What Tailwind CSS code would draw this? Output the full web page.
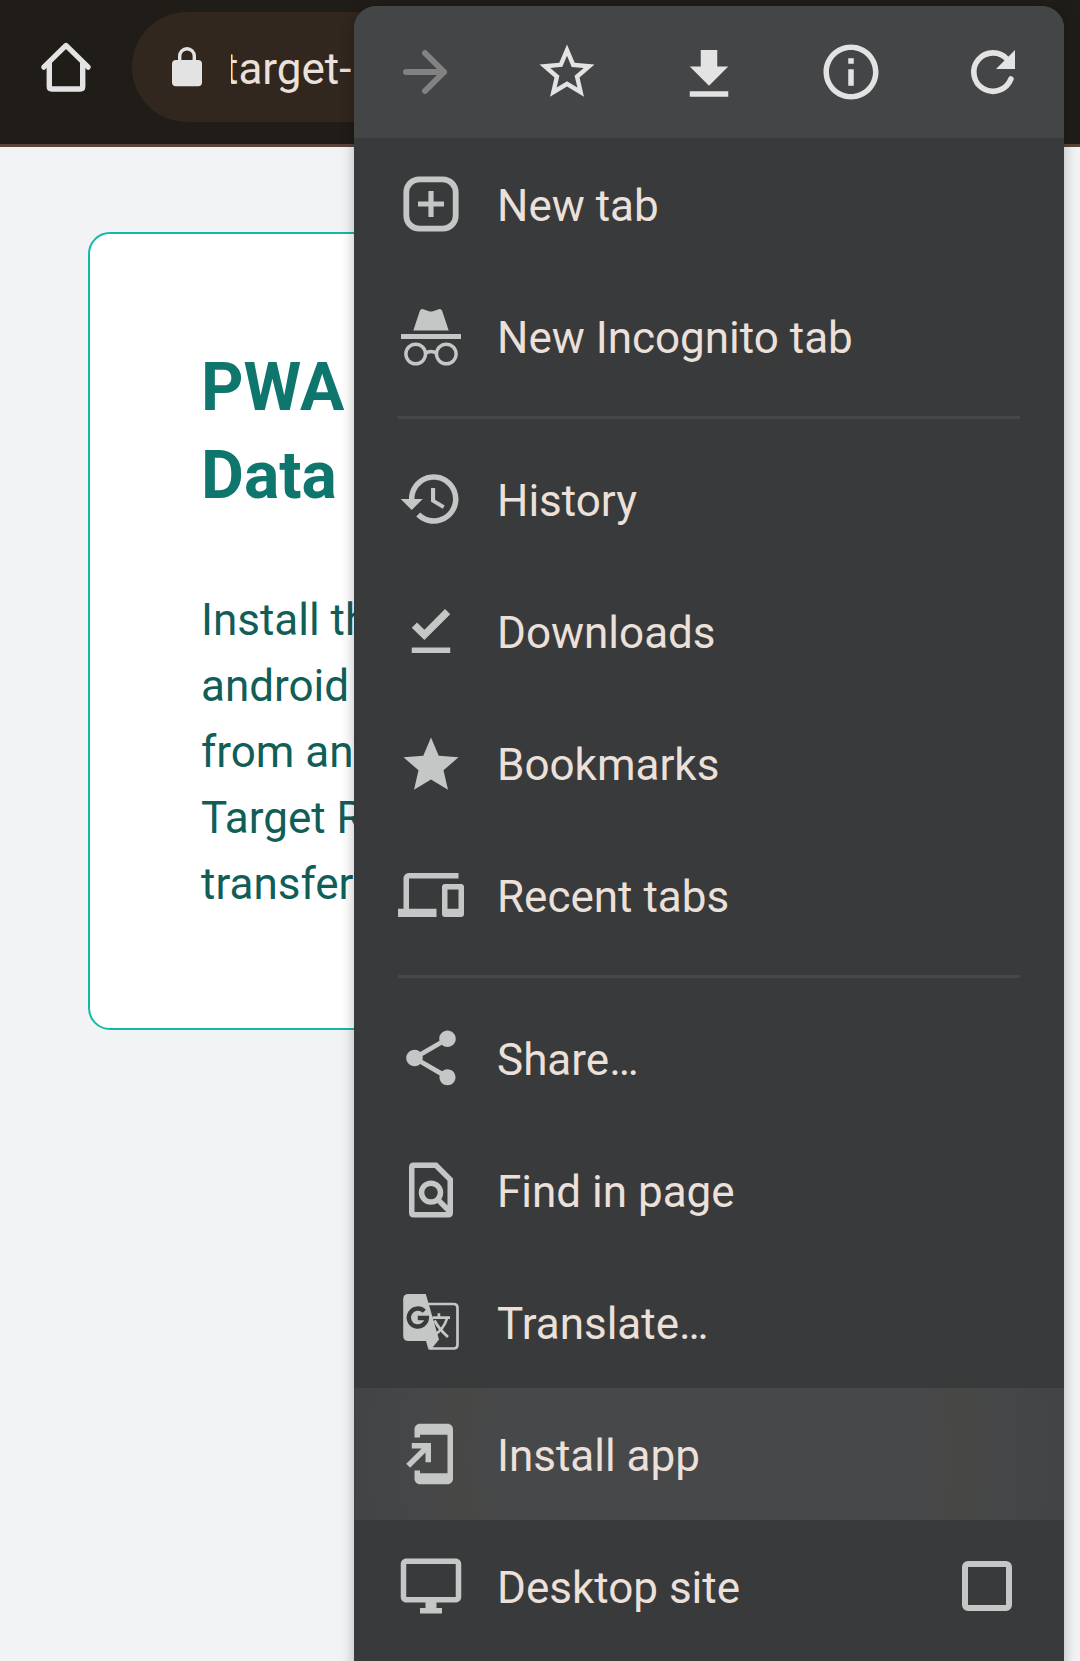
<!DOCTYPE html>
<html lang="en">
<head>
<meta charset="utf-8">
<title>PWA Data Target</title>
<script src="https://cdn.jsdelivr.net/npm/@tailwindcss/browser@4"></script>
</head>
<body class="relative h-[1661px] w-[1080px] overflow-hidden bg-[#f2f3f5] font-[Roboto,sans-serif] text-[44px] leading-[66px]">

<!-- Browser toolbar -->
<header class="flex h-[147px] items-start border-b-[3px] border-[#584538] bg-[#201c17]">
  <svg class="mt-[34px] ml-[33px] size-[66px] shrink-0" viewBox="0 0 66 66" fill="none" stroke="#e3e3e3" stroke-linecap="round">
    <path d="M10.8 33.2 33 11.4 55.2 33.2" stroke-width="5.2" stroke-linejoin="round"/>
    <path d="M16.3 29V52.500q0 2.500 2.500 2.500H47.200q2.500 0 2.500-2.500V29" stroke-width="5.400" stroke-linecap="butt"/>
  </svg>
  <div class="mt-3 mr-[80px] ml-[33px] flex h-[110px] grow items-center rounded-full bg-[#32271f]">
    <svg class="ml-[40px] h-[40px] w-[30px] shrink-0" viewBox="0 0 30 40">
      <rect y="13" width="30" height="26.200" rx="4" fill="#e3e3e3"/>
      <path d="M7.700 15V9a7.300 7.300 0 0 1 14.600 0v6" fill="none" stroke="#e3e3e3" stroke-width="3.400"/>
    </svg>
    <div class="ml-[29px] overflow-hidden text-[#ece0da]"><span class="-ml-[7px] block pt-[3px]">target-</span></div>
  </div>
</header>

<!-- Page content -->
<main class="px-[88px] pt-[85px]">
  <section class="h-[798px] overflow-hidden rounded-[22px] border-2 border-[#14b8a6] bg-white px-[111px] py-[110px] whitespace-nowrap">
    <h1 class="text-[66px] leading-[88px] font-bold text-[#0f766e]">PWA<br>Data</h1>
    <p class="pt-[67px] text-[#115e59]">Install this<br>android<br>from any<br>Target R<br>transfer</p>
  </section>
</main>

<!-- Overflow menu, floating above the page -->
<nav class="absolute top-[6px] left-[354px] h-[1680px] w-[710px] overflow-hidden rounded-t-[22px] bg-[#393a3b] text-[#ece0da] shadow-[0_3px_14px_rgba(0,0,0,0.26)]">
  <div class="grid h-[132px] grid-cols-5 place-items-center bg-[#444546]">
    <svg class="size-[66px]" viewBox="0 0 66 66" fill="none" stroke="#828282" stroke-width="6" stroke-linecap="round" stroke-linejoin="round"><path d="M14 33H52M33 14 52 33 33 52"/></svg>
    <svg class="size-[66px]" viewBox="0 0 24 24" fill="#e3e3e3"><path d="M22 9.240l-7.190-.620L12 2 9.190 8.630 2 9.240l5.460 4.730L5.820 21 12 17.270 18.180 21l-1.630-7.030L22 9.240zM12 15.400l-3.760 2.270 1-4.280-3.320-2.880 4.380-.380L12 6.100l1.710 4.040 4.380.380-3.320 2.880 1 4.280L12 15.400z"/></svg>
    <svg class="size-[66px]" viewBox="0 0 24 24" fill="#e3e3e3"><path d="M9 4h6v6h4l-7 7-7-7h4zM5 19h14v2H5z"/></svg>
    <svg class="size-[66px]" viewBox="0 0 24 24" fill="#e3e3e3"><path d="M11 7h2v2h-2zm0 4h2v6h-2zm1-9C6.480 2 2 6.480 2 12s4.480 10 10 10 10-4.480 10-10S17.520 2 12 2zm0 18c-4.410 0-8-3.590-8-8s3.590-8 8-8 8 3.590 8 8-3.590 8-8 8z"/></svg>
    <svg class="size-[66px]" viewBox="0 0 66 66"><path d="M47.500 20.500A19.200 19.200 0 1 0 50.900 40" fill="none" stroke="#e3e3e3" stroke-width="5.600" stroke-linecap="round"/><path d="M55 11V30H36z" fill="#e3e3e3"/></svg>
  </div>

  <div class="flex h-[132px] items-center gap-[33px] px-[44px]">
    <svg class="size-[66px]" viewBox="0 0 66 66" fill="none" stroke="#c5c7c6"><rect x="8.300" y="8.300" width="49.400" height="49.400" rx="13" stroke-width="5.800"/><path d="M20 33H46M33 20V46" stroke-width="5.200"/></svg>
    <span class="pt-[3px]">New tab</span>
  </div>
  <div class="flex h-[132px] items-center gap-[33px] px-[44px]">
    <svg class="size-[66px]" viewBox="0 0 66 66" fill="#c5c7c6">
      <path d="M15.300 27.500 21.800 8Q22.800 5.600 25.200 6.200L31 8.200Q33 8.900 35 8.200L40.800 6.200Q43.200 5.600 44.200 8L50.700 27.500zM3 31H63V36H3z"/>
      <g fill="none" stroke="#c5c7c6" stroke-width="3.400"><circle cx="17.700" cy="51" r="9.800"/><circle cx="48.300" cy="51" r="9.800"/><path d="M27 50.500Q33 46.500 39 50.500"/></g>
    </svg>
    <span class="pt-[3px]">New Incognito tab</span>
  </div>
  <hr class="mx-[44px] my-[14px] border-t-[3px] border-[#464747]">
  <div class="flex h-[132px] items-center gap-[33px] px-[44px]">
    <svg class="size-[66px]" viewBox="0 0 24 24" fill="#c5c7c6"><path d="M13 3c-4.970 0-9 4.030-9 9H1l3.890 3.890.070.140L9 12H6c0-3.870 3.130-7 7-7s7 3.130 7 7-3.130 7-7 7c-1.930 0-3.680-.790-4.940-2.060l-1.420 1.420C8.270 19.990 10.510 21 13 21c4.970 0 9-4.030 9-9s-4.030-9-9-9zm-1 5v5l4.280 2.540.720-1.210-3.500-2.080V8H12z"/></svg>
    <span class="pt-[3px]">History</span>
  </div>
  <div class="flex h-[132px] items-center gap-[33px] px-[44px]">
    <svg class="size-[66px]" viewBox="0 0 24 24" fill="#c5c7c6"><path d="M17.100 4 19 5.900 9.600 15.300 5 10.800 6.900 8.900 9.600 11.500zM5 18h14v2H5z"/></svg>
    <span class="pt-[3px]">Downloads</span>
  </div>
  <div class="flex h-[132px] items-center gap-[33px] px-[44px]">
    <svg class="size-[66px]" viewBox="0 -0.700 24 24" fill="#c5c7c6"><path d="M12 17.270 18.180 21l-1.640-7.030L22 9.240l-7.190-.610L12 2 9.190 8.630 2 9.240l5.460 4.730L5.820 21z"/></svg>
    <span class="pt-[3px]">Bookmarks</span>
  </div>
  <div class="flex h-[132px] items-center gap-[33px] px-[44px]">
    <svg class="size-[66px]" viewBox="0 0 24 24" fill="#c5c7c6"><path d="M4 6h18V4H4c-1.100 0-2 .900-2 2v11H0v3h14v-3H4V6zm19 2h-6c-.550 0-1 .450-1 1v10c0 .550.450 1 1 1h6c.550 0 1-.450 1-1V9c0-.550-.450-1-1-1zm-1 9h-4v-7h4v7z"/></svg>
    <span class="pt-[3px]">Recent tabs</span>
  </div>
  <hr class="mx-[44px] my-[14px] border-t-[3px] border-[#464749]">
  <div class="flex h-[132px] items-center gap-[33px] px-[44px]">
    <svg class="size-[66px]" viewBox="0 0 24 24" fill="#c5c7c6"><path d="M18 16.080c-.760 0-1.440.300-1.960.770L8.910 12.700c.050-.230.090-.460.090-.700s-.040-.470-.090-.700l7.050-4.110c.540.500 1.250.810 2.040.810 1.660 0 3-1.340 3-3s-1.340-3-3-3-3 1.340-3 3c0 .240.040.470.090.700L8.040 9.810C7.500 9.310 6.790 9 6 9c-1.660 0-3 1.340-3 3s1.340 3 3 3c.790 0 1.500-.310 2.040-.810l7.120 4.160c-.050.210-.080.430-.080.650 0 1.610 1.310 2.920 2.920 2.920s2.920-1.310 2.920-2.920-1.310-2.920-2.920-2.920z"/></svg>
    <span class="pt-[3px]">Share…</span>
  </div>
  <div class="flex h-[132px] items-center gap-[33px] px-[44px]">
    <svg class="size-[66px]" viewBox="0 0 24 24" fill="none" stroke="#c5c7c6" stroke-width="2"><path d="M5.700 3H13.800L19 8.200V20.300Q19 21 18.300 21H5.700Q5 21 5 20.300V3.700Q5 3 5.700 3zM14.300 15.300 19 20"/><circle cx="12" cy="12.950" r="3.450"/></svg>
    <span class="pt-[3px]">Find in page</span>
  </div>
  <div class="flex h-[132px] items-center gap-[33px] px-[44px]">
    <svg class="size-[66px]" viewBox="0 0 66 66" fill="none" stroke="#c5c7c6">
      <path d="M29 15H55.500Q59.500 15 59.500 19V55.500Q59.500 59.500 55.500 59.500H32" stroke-width="2.700"/>
      <path d="M10.500 5H27.800L41 50.500 33 60.500H30.500L28 52H10.500Q5.200 52 5.200 46.700V10.300Q5.200 5 10.500 5z" fill="#c5c7c6" stroke="none"/>
      <path d="M26.300 22.300A9 9 0 1 0 28.800 29H19.800" stroke="#393a3b" stroke-width="4.400"/>
      <path d="M34.500 28.700H52M40.900 24.300V28.700M49 29.500Q46 40 35.500 46.800M36.500 31.500Q41 40 50 48" stroke-width="2.700"/>
    </svg>
    <span class="pt-[3px]">Translate…</span>
  </div>
  <div class="flex h-[132px] items-center gap-[33px] bg-[radial-gradient(circle_at_center,#474849_0,#474849_225px,#474746_245px,#474746_268px,#464748_285px,#434446_355px)] px-[44px]">
    <svg class="size-[66px]" viewBox="0 0 24 24" fill="#c5c7c6"><path d="M18 1.010L8 1c-1.100 0-2 .900-2 2v3h2V5h10v14H8v-1H6v3c0 1.100.900 2 2 2h10c1.100 0 2-.900 2-2V3c0-1.100-.900-1.990-2-1.990zM10 15h2V8H5v2h3.590L3 15.590 4.410 17 10 11.410V15z"/></svg>
    <span class="pt-[3px]">Install app</span>
  </div>
  <div class="flex h-[132px] items-center gap-[33px] px-[44px]">
    <svg class="size-[66px]" viewBox="0 0 24 24" fill="#c5c7c6"><path d="M21 2H3c-1.100 0-2 .900-2 2v12c0 1.100.900 2 2 2h7v2H8v2h8v-2h-2v-2h7c1.100 0 2-.900 2-2V4c0-1.100-.900-2-2-2zm0 14H3V4h18v12z"/></svg>
    <span class="pt-[3px]">Desktop site</span>
    <span class="mr-[8px] ml-auto size-[50px] rounded-[6px] border-[6px] border-[#c5c7c6]"></span>
  </div>
</nav>
</body>
</html>
